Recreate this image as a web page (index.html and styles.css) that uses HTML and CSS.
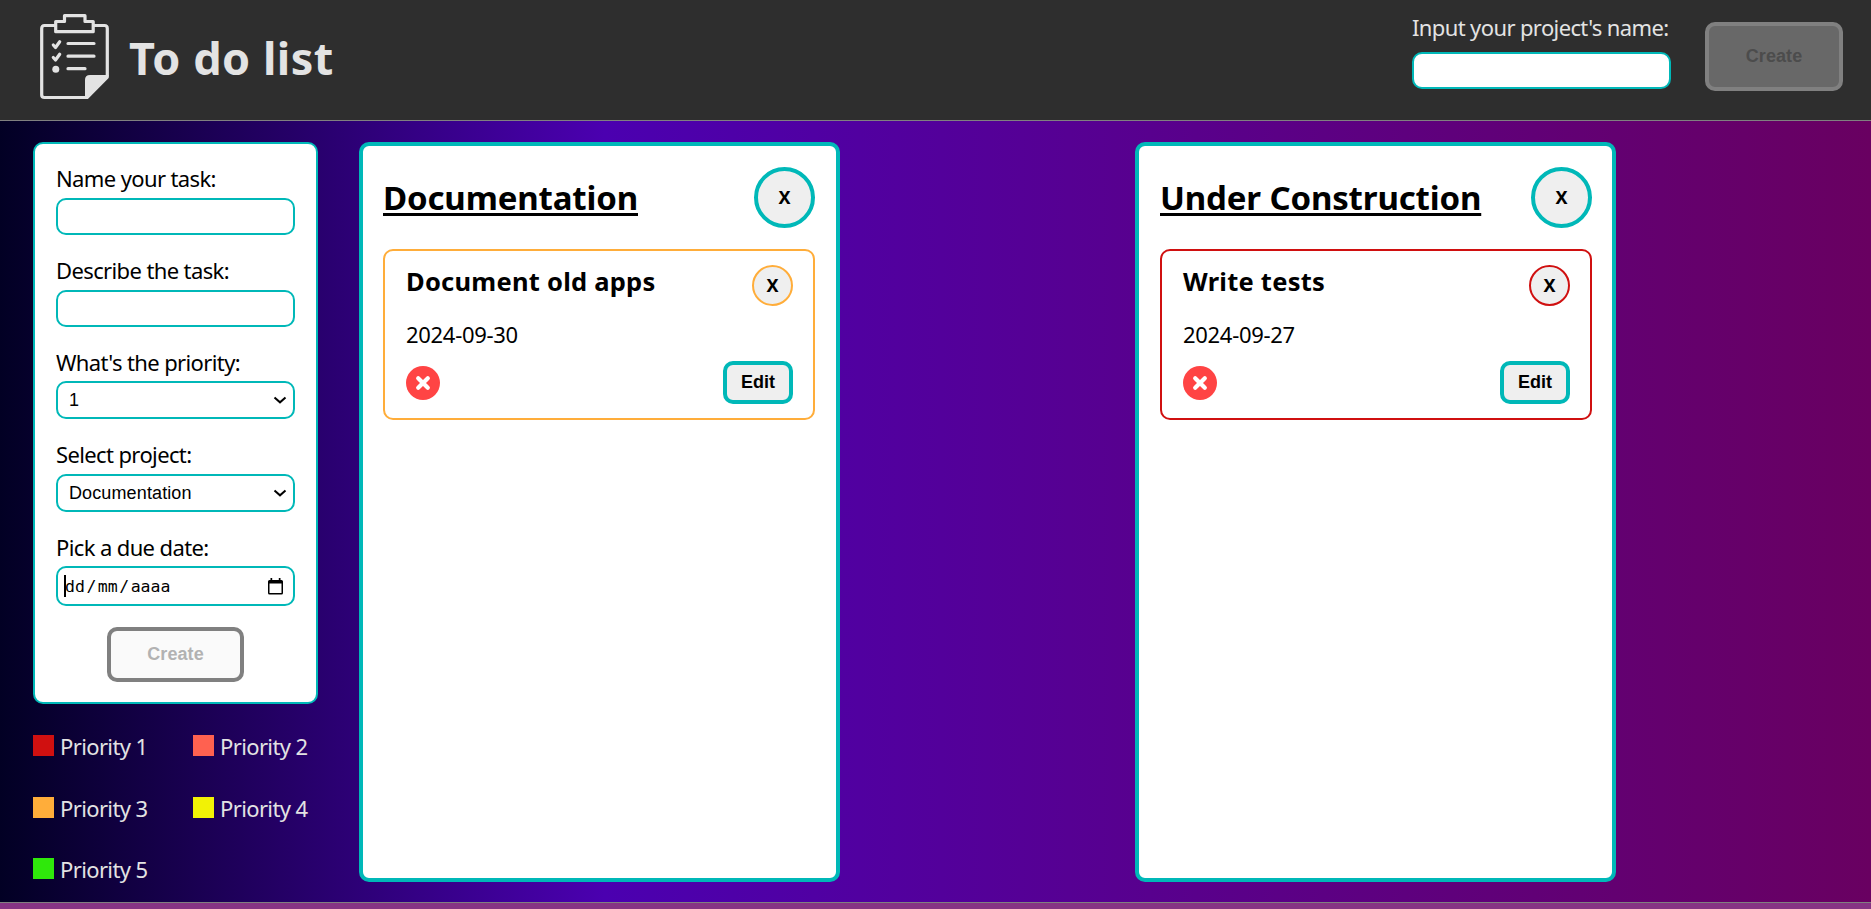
FILE: index.html
```html
<!DOCTYPE html>
<html lang="en">
<head>
<meta charset="utf-8">
<title>To do list</title>
<link rel="stylesheet" href="styles.css">
</head>
<body>
<header class="header">
  <div class="brand">
    <svg class="logo" width="70" height="86" viewBox="0 0 70 86" fill="none" stroke="#e3e3e3" stroke-width="3.2" stroke-linejoin="round" stroke-linecap="round">
      <path d="M14.500 11.500H4.500Q1.700 11.500 1.700 14.500V81Q1.700 83.500 4.500 83.500H47L67.300 63V14.500Q67.300 11.500 64.500 11.500H54.500"/>
      <path d="M15.700 17.700V7.500H24.500V1.700H45V7.500H53.200V17.700Z"/>
      <path d="M28 29.500H54M28 42.200H54M28 54.700H45"/>
      <path d="M13.300 31L15.500 33.500L19.700 27.700M13.300 43.500L15.500 46L19.700 40.200"/>
      <circle cx="15.800" cy="55.300" r="3.500" fill="#e3e3e3" stroke="none"/>
      <path d="M45 84V66Q45 61 50 61H69L47 84Z" fill="#e3e3e3" stroke="none"/>
    </svg>
    <h1 class="title">To do list</h1>
  </div>
  <div class="project-form">
    <div>
      <label class="label">Input your project's name:</label>
      <input class="field project-name" type="text">
    </div>
    <button class="create create-project" disabled>Create</button>
  </div>
</header>
<main class="main">
  <aside class="side">
    <form class="task-form">
      <label class="label">Name your task:</label>
      <input class="field" type="text">
      <label class="label">Describe the task:</label>
      <input class="field" type="text">
      <label class="label short">What's the priority:</label>
      <div class="field select"><span>1</span><svg class="chevron" width="14" height="8" viewBox="0 0 14 8"><path d="M1.500 1.500L7 6.300L12.500 1.500" fill="none" stroke="#000" stroke-width="2"/></svg></div>
      <label class="label">Select project:</label>
      <div class="field select"><span class="wide">Documentation</span><svg class="chevron" width="14" height="8" viewBox="0 0 14 8"><path d="M1.500 1.500L7 6.300L12.500 1.500" fill="none" stroke="#000" stroke-width="2"/></svg></div>
      <label class="label short">Pick a due date:</label>
      <div class="field date"><span class="caret"></span><span class="parts">dd<i>/</i>mm<i>/</i>aaaa</span><svg class="calendar" width="15" height="17" viewBox="0 0 15 17"><path d="M1.500 2H13.500Q15 2 15 3.500V15Q15 16.500 13.500 16.500H1.500Q0 16.500 0 15V3.500Q0 2 1.500 2ZM1.500 5.500V15H13.500V5.500Z" fill-rule="evenodd"/><path d="M2.500 0H4.200V3H2.500ZM10.800 0H12.500V3H10.800Z"/></svg></div>
      <button class="create create-task" disabled>Create</button>
    </form>
    <ul class="legend">
      <li><b class="swatch p1"></b><span>Priority 1</span></li>
      <li><b class="swatch p2"></b><span>Priority 2</span></li>
      <li><b class="swatch p3"></b><span>Priority 3</span></li>
      <li><b class="swatch p4"></b><span>Priority 4</span></li>
      <li><b class="swatch p5"></b><span>Priority 5</span></li>
    </ul>
  </aside>
  <section class="project">
    <div class="project-head"><h2>Documentation</h2><button class="close">X</button></div>
    <article class="task medium">
      <div class="task-head"><h3>Document old apps</h3><button class="remove">X</button></div>
      <p class="due">2024-09-30</p>
      <div class="task-foot">
        <svg class="status" width="34" height="34" viewBox="0 0 34 34"><circle cx="17" cy="17" r="17" fill="#ff4444"/><path d="M12.200 12.200L21.800 21.800M21.800 12.200L12.200 21.800" stroke="#fff" stroke-width="4.200" stroke-linecap="round"/></svg>
        <button class="edit">Edit</button>
      </div>
    </article>
  </section>
  <section class="project">
    <div class="project-head"><h2>Under Construction</h2><button class="close">X</button></div>
    <article class="task urgent">
      <div class="task-head"><h3>Write tests</h3><button class="remove">X</button></div>
      <p class="due">2024-09-27</p>
      <div class="task-foot">
        <svg class="status" width="34" height="34" viewBox="0 0 34 34"><circle cx="17" cy="17" r="17" fill="#ff4444"/><path d="M12.200 12.200L21.800 21.800M21.800 12.200L12.200 21.800" stroke="#fff" stroke-width="4.200" stroke-linecap="round"/></svg>
        <button class="edit">Edit</button>
      </div>
    </article>
  </section>
</main>
<footer class="footer"></footer>
</body>
</html>
```
FILE: styles.css
```css
* { box-sizing: border-box; }
body {
  margin: 0;
  height: 909px;
  overflow: hidden;
  display: grid;
  grid-template-columns: 100%;
  grid-template-rows: 121px 781px 7px;
  font-family: "Noto Sans", sans-serif;
  font-size: 22px;
  color: #000;
}
h1, h2, h3, p, ul { margin: 0; padding: 0; }
.header {
  display: flex;
  justify-content: space-between;
  padding: 14px 28px 0 40px;
  background: #2e2e2e;
  border-bottom: 1px solid #808080;
  color: #e3e3e3;
}
.brand { display: flex; gap: 19px; }
.title { font-size: 45px; line-height: 87px; letter-spacing: 0.5px; white-space: nowrap; }
.project-form { display: flex; gap: 34px; }
.label { display: block; height: 30px; line-height: 27px; white-space: nowrap; letter-spacing: -0.62px; }
.field {
  display: block;
  width: 239px;
  height: 37px;
  border: 2px solid #00b8b8;
  border-radius: 10px;
  background: #fff;
  margin-bottom: 20px;
  font-family: "Liberation Sans", Arial, sans-serif;
  font-size: 18px;
  outline: none;
}
.project-name { width: 259px; margin-top: 8px; }
.project-form .label { width: 259px; }
.create {
  font: bold 18px "Liberation Sans", Arial, sans-serif;
  letter-spacing: 0.1px;
  border: 4px solid #808080;
  border-radius: 10px;
  padding: 0;
}
.create-project { width: 138px; height: 69px; margin-top: 8px; background: #686868; color: #4c4c4c; }
.main {
  display: flex;
  padding: 21px 0 0 33px;
  background: linear-gradient(90deg, #020024 0%, #4b00b0 32.3%, #690061 100%);
}
.side { width: 285px; margin-right: 41px; flex: none; }
.task-form {
  width: 285px;
  height: 562px;
  padding: 19px 21px 0;
  background: #fff;
  border: 2px solid #00b8b8;
  border-radius: 10px;
}
.task-form .label { height: 35px; line-height: 31px; }
.task-form .short { height: 34px; }
.select { display: flex; align-items: center; justify-content: space-between; height: 38px; padding: 0 6px 0 11px; }
.wide { letter-spacing: 0.12px; }
.date {
  display: flex;
  align-items: center;
  height: 40px;
  padding: 0 10px 0 6px;
  font: 16.5px "DejaVu Sans Mono", monospace;
}
.caret { width: 2px; height: 22px; margin-right: -1px; background: #000; }
.parts i { font-style: normal; margin: 0 1.5px; }
.calendar { margin-left: auto; }
.create-task { display: block; width: 137px; height: 55px; margin: 21px auto 0; background: #fafafa; color: #b2b2b2; }
.legend { list-style: none; display: grid; grid-template-columns: 160px 125px; grid-auto-rows: 61.5px; padding-top: 27px; color: #e3e3e3; }
.legend li { display: flex; gap: 6px; height: 30px; line-height: 30px; white-space: nowrap; letter-spacing: -0.62px; }
.swatch { width: 21px; height: 21px; margin-top: 4px; }
.p1 { background: #d01010; }
.p2 { background: #ff6150; }
.p3 { background: #ffad3a; }
.p4 { background: #f2f205; }
.p5 { background: #2fe80b; }
.project {
  width: 481px;
  height: 740px;
  flex: none;
  padding: 21px 21px 0 20px;
  background: #fff;
  border: 4px solid #00b8b8;
  border-radius: 10px;
}
.project + .project { margin-left: 295px; padding: 21px 20px 0 21px; }
.project-head { display: flex; justify-content: space-between; height: 61px; }
.project-head h2 {
  font-size: 33px;
  line-height: 61px;
  letter-spacing: -0.15px;
  white-space: nowrap;
  text-decoration: underline;
  text-decoration-thickness: 3px;
  text-underline-offset: 3px;
  text-decoration-skip-ink: none;
}
.close, .remove, .edit { padding: 0; background: #efefef; color: #000; }
.close { width: 61px; height: 61px; padding-bottom: 2px; border: 4px solid #00b8b8; border-radius: 50%; font: bold 18px "Noto Sans", sans-serif; }
.task { width: 432px; height: 171px; margin-top: 21px; padding: 14px 20px 0 21px; border: 2px solid; border-radius: 10px; }
.medium, .medium .remove { border-color: #ffad3a; }
.urgent, .urgent .remove { border-color: #d01010; }
.task-head { display: flex; justify-content: space-between; }
.task h3 { font-size: 25.5px; line-height: 33px; letter-spacing: 0.25px; white-space: nowrap; }
.remove { width: 41px; height: 41px; padding-bottom: 2px; border: 2px solid; border-radius: 50%; font: bold 18px "Noto Sans", sans-serif; }
.due { line-height: 30px; margin-top: 13px; letter-spacing: -0.3px; }
.task-foot { display: flex; justify-content: space-between; align-items: center; margin-top: 12px; }
.edit { width: 70px; height: 43px; border: 4px solid #00b8b8; border-radius: 10px; font: bold 18px "Liberation Sans", Arial, sans-serif; }
.footer { background: #863484; border-top: 1px solid #808080; }
```
